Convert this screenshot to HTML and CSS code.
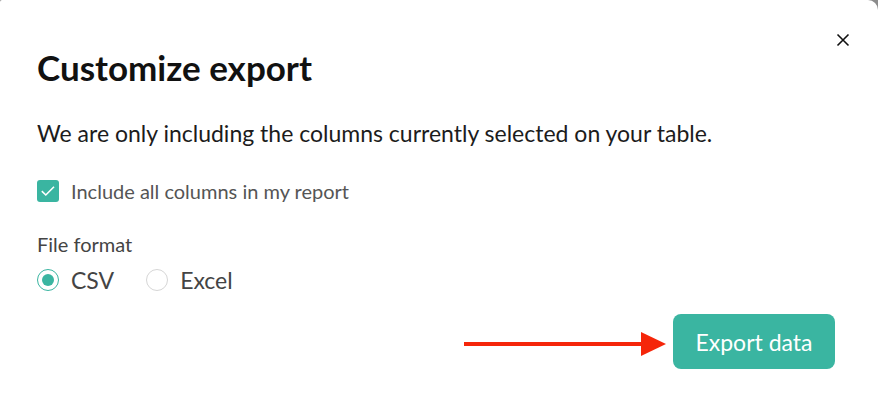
FILE: index.html
```html
<!DOCTYPE html>
<html lang="en">
<head>
    <meta charset="UTF-8">
    <meta name="viewport" content="width=device-width, initial-scale=1.0">
    <title>Customize export</title>
    <link rel="stylesheet" href="styles.css">
</head>
<body>
    <div class="modal">
        <button class="close-btn" aria-label="Close">
            <svg width="14" height="14" viewBox="0 0 14 14">
                <path d="M1.5 1.5 L12.5 12.5 M12.5 1.5 L1.5 12.5" stroke="#111" stroke-width="1.6" fill="none"/>
            </svg>
        </button>

        <h1>Customize export</h1>

        <p class="intro">We are only including the columns currently selected on your table.</p>

        <label class="check-row">
            <span class="checkbox">
                <svg width="22" height="22" viewBox="0 0 22 22">
                    <path d="M4.8 11.2 L8.8 15 L17 6.8" stroke="#fff" stroke-width="1.6" fill="none"/>
                </svg>
            </span>
            Include all columns in my report
        </label>

        <div class="format">
            <div class="format-label">File format</div>
            <div class="radio-group">
                <label class="radio-row">
                    <span class="radio checked"></span>
                    CSV
                </label>
                <label class="radio-row">
                    <span class="radio"></span>
                    Excel
                </label>
            </div>
        </div>

        <div class="footer">
            <div class="arrow">
                <span class="arrow-line"></span>
                <span class="arrow-head"></span>
            </div>
            <button class="btn">Export data</button>
        </div>
    </div>
</body>
</html>
```

FILE: styles.css
```css
* {
    margin: 0;
    padding: 0;
    box-sizing: border-box;
}

body {
    font-family: 'Lato', 'Noto Sans', sans-serif;
    background: #8c8c8c;
    width: 878px;
    height: 410px;
    overflow: hidden;
}

.modal {
    position: relative;
    background: white;
    height: 410px;
    border-radius: 2px 10px 0 0;
    padding: 47px 37px 0 37px;
}

.close-btn {
    position: absolute;
    top: 33px;
    right: 28px;
    background: none;
    border: none;
    width: 14px;
    height: 14px;
    cursor: pointer;
}

.close-btn svg {
    display: block;
}

h1 {
    font-size: 35px;
    font-weight: 700;
    color: #111;
    line-height: 40px;
}

.intro {
    margin-top: 32px;
    font-size: 23px;
    color: #1c1c1c;
    line-height: 28px;
}

.check-row {
    display: flex;
    align-items: center;
    gap: 12px;
    margin-top: 32px;
    font-size: 20px;
    line-height: 24px;
    color: #555;
}

.checkbox {
    width: 22px;
    height: 22px;
    border-radius: 3px;
    background: #3ab5a1;
}

.checkbox svg {
    display: block;
}

.format {
    margin-top: 29px;
}

.format-label {
    font-size: 20px;
    color: #444;
    line-height: 24px;
}

.radio-group {
    display: flex;
    gap: 32px;
    margin-top: 10px;
}

.radio-row {
    display: flex;
    align-items: center;
    gap: 12px;
    font-size: 23px;
    line-height: 28px;
    color: #444;
}

.radio {
    width: 22px;
    height: 22px;
    border-radius: 50%;
    border: 1.5px solid #d6d6d6;
    display: flex;
    align-items: center;
    justify-content: center;
}

.radio.checked {
    border-color: #3ab5a1;
}

.radio.checked::after {
    content: '';
    width: 12px;
    height: 12px;
    border-radius: 50%;
    background: #3ab5a1;
}

.footer {
    display: flex;
    justify-content: flex-end;
    align-items: flex-start;
    gap: 7px;
    margin-top: 20px;
    padding-right: 6px;
}

.arrow {
    display: flex;
    align-items: center;
    margin-top: 18px;
}

.arrow-line {
    width: 177px;
    height: 4px;
    background: #f5260a;
}

.arrow-head {
    width: 0;
    height: 0;
    border-top: 12.5px solid transparent;
    border-bottom: 12.5px solid transparent;
    border-left: 25px solid #f5260a;
}

.btn {
    background: #3ab5a1;
    color: white;
    border: none;
    border-radius: 8px;
    width: 162px;
    height: 55px;
    font-family: inherit;
    font-size: 23px;
    cursor: pointer;
}
```
